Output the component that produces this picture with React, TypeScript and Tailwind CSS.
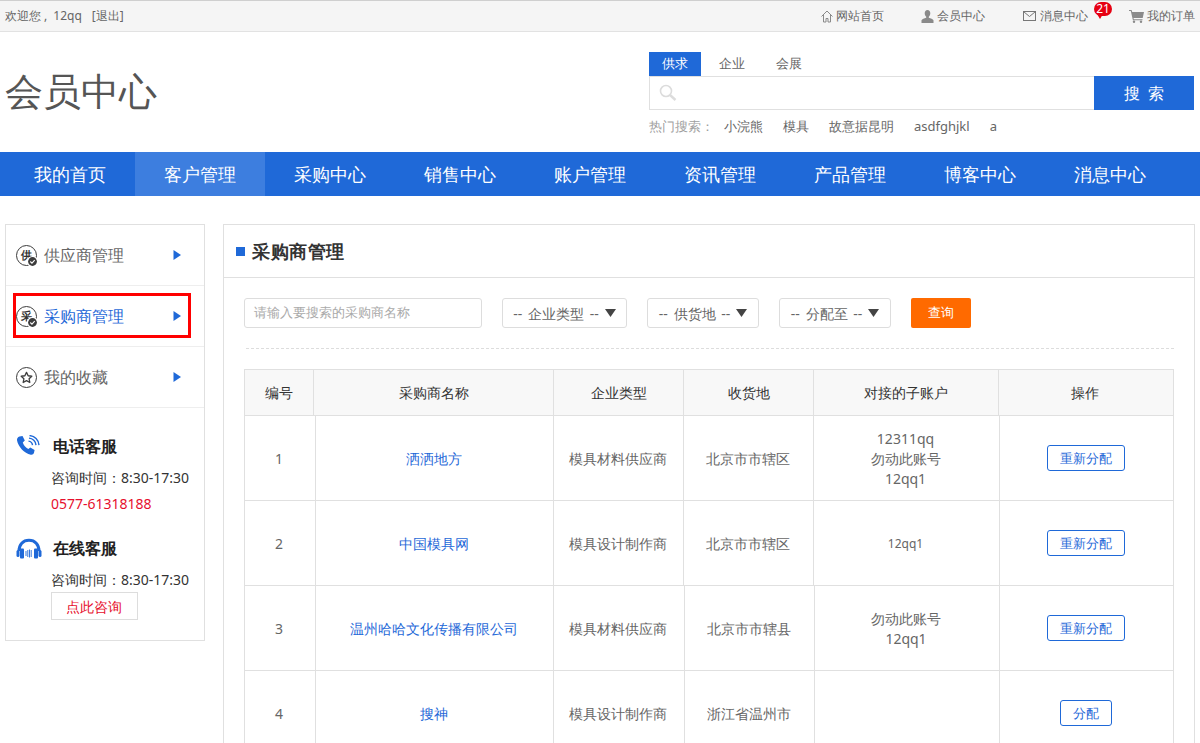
import React from 'react';

const FONT = "font-['Noto_Sans_CJK_SC','Microsoft_YaHei',sans-serif]";

const navItems = ['我的首页', '客户管理', '采购中心', '销售中心', '账户管理', '资讯管理', '产品管理', '博客中心', '消息中心'];
const hotWords = ['小浣熊', '模具', '故意据昆明', 'asdfghjkl', 'a'];

function HomeIcon() {
  return (
    <svg width="12" height="13" viewBox="0 0 12 13" fill="none" stroke="#8a8a8a" strokeWidth="1">
      <path d="M0.5 6.5 6 1l5.500 5.500M2.500 5v7h2.500V8.500h2V12h2.500V5" />
    </svg>
  );
}

function UserIcon() {
  return (
    <svg width="13" height="13" viewBox="0 0 13 13" fill="#8a8a8a">
      <path d="M6.500 0C8.300 0 9.300 1.300 9.300 3.200c0 1.500-.6 2.800-1.500 3.500v1.100c1.800.5 4.200 1.200 4.700 2.500V13H.5v-2.700c.5-1.300 2.900-2 4.700-2.500V6.700C4.300 6 3.700 4.700 3.700 3.200 3.700 1.300 4.700 0 6.500 0z" />
    </svg>
  );
}

function MailIcon() {
  return (
    <svg width="13" height="10" viewBox="0 0 13 10" fill="none" stroke="#777" strokeWidth="1">
      <rect x="0.500" y="0.500" width="12" height="9" />
      <path d="M0.800 0.800 6.500 5.500l5.700-4.700" />
    </svg>
  );
}

function CartIcon() {
  return (
    <svg width="15" height="13" viewBox="0 0 15 13" fill="#8a8a8a">
      <path d="M0 0h2.600l.6 2H15l-1.300 6H4.500l.3 1.200H13.500v1H3.900L1.800 1H0z" />
      <circle cx="5" cy="11.800" r="1.200" />
      <circle cx="12" cy="11.800" r="1.200" />
    </svg>
  );
}

function SearchIcon() {
  return (
    <svg width="18" height="18" viewBox="0 0 18 18" fill="none" stroke="#dcdcdc">
      <circle cx="7" cy="7" r="5.500" strokeWidth="1.600" />
      <path d="M11 11l5.500 5" strokeWidth="2.400" />
    </svg>
  );
}

function Arrow() {
  return (
    <svg width="8" height="10" viewBox="0 0 8 10" fill="#1f69d8">
      <path d="M0.500 0 8 5 0.500 10z" />
    </svg>
  );
}

function CheckBadge() {
  return (
    <svg className="absolute right-[-2px] bottom-[-2px]" width="11" height="11" viewBox="0 0 10 10">
      <circle cx="5" cy="5" r="5" fill="#fff" />
      <circle cx="5" cy="5" r="4" fill="#3c3c3c" />
      <path d="M3 5l1.500 1.500L7 3.800" fill="none" stroke="#fff" strokeWidth="1" />
    </svg>
  );
}

function CircleGlyph({ glyph }: { glyph: string }) {
  return (
    <div className="relative w-[21px] h-[21px] rounded-full border-[1.500px] border-[#3c3c3c] flex items-center justify-center pb-[2px] text-[11px] leading-none font-bold text-[#333]">
      {glyph}
      <CheckBadge />
    </div>
  );
}

function StarGlyph() {
  return (
    <div className="w-[21px] h-[21px] rounded-full border-[1.500px] border-[#3c3c3c] flex items-center justify-center">
      <svg width="13" height="13" viewBox="0 0 24 24" fill="none" stroke="#3c3c3c" strokeWidth="2.400" strokeLinejoin="round">
        <path d="M12 2.500l3 6.300 6.800.9-5 4.700 1.300 6.800-6.100-3.300-6.100 3.300 1.300-6.800-5-4.700 6.800-.9z" />
      </svg>
    </div>
  );
}

function PhoneIcon() {
  return (
    <svg width="24" height="22" viewBox="0 0 24 22" fill="#1f69d8">
      <path d="M3.500 1.500 6.500 1l2.300 4.600-2 2c.8 2.600 2.800 5 5.500 6.500l2-1.700 4.300 2.600-.6 2.800c-.3 1.400-1.800 2.200-3.200 1.900C8.200 18.200 2.200 11.800 1 5.200.8 3.500 1.800 2 3.500 1.500z" />
      <path d="M12.500 5.500a4.500 4.500 0 0 1 4 4M13 2.500a7.500 7.500 0 0 1 7 7M13.500 0a10 10 0 0 1 9.500 9.500" fill="none" stroke="#1f69d8" strokeWidth="1.400" transform="translate(0 0.600)" />
    </svg>
  );
}

function HeadsetIcon() {
  return (
    <svg width="26" height="21" viewBox="0 0 26 21" fill="#1f69d8">
      <path d="M3 13C3 6.500 7 2.200 13 2.200S23 6.500 23 13" fill="none" stroke="#1f69d8" strokeWidth="3" />
      <rect x="0.500" y="12" width="3" height="7" rx="1.500" />
      <rect x="4" y="10.500" width="4" height="10" rx="1" />
      <rect x="18" y="10.500" width="4" height="10" rx="1" />
      <rect x="22.500" y="12" width="3" height="7" rx="1.500" />
      <path d="M10 13v5M11.800 12v7M13.500 11.500v8M15.200 12v7" stroke="#1f69d8" strokeWidth="0.900" />
    </svg>
  );
}

function SelectBox({ label, w }: { label: string; w: string }) {
  return (
    <div className={`${w} h-[30px] border border-[#dddddd] rounded-[3px] flex items-center justify-center gap-[6px] text-[14px] text-[#666]`}>
      <span className="[word-spacing:2px]">-- {label} --</span>
      <svg width="11" height="8" viewBox="0 0 11 8" fill="#444">
        <path d="M0 0h11L5.500 8z" />
      </svg>
    </div>
  );
}

function SideItem({ icon, label, active }: { icon: React.ReactNode; label: string; active?: boolean }) {
  return (
    <div className="h-[61px] border-b border-[#eeeeee] flex items-center pl-[10px]">
      <div className="w-[21px] flex justify-center">{icon}</div>
      <span className={`ml-[7px] text-[16px] w-[129px] ${active ? 'text-[#1f69d8]' : 'text-[#666]'}`}>{label}</span>
      <Arrow />
    </div>
  );
}

interface RowData {
  no: number;
  name: string;
  type: string;
  place: string;
  account: React.ReactNode;
  action: string;
  edges: [string, string, string, string, string];
}

const rows: RowData[] = [
  {
    no: 1,
    name: '洒洒地方',
    type: '模具材料供应商',
    place: '北京市市辖区',
    account: (
      <>
        <div>12311qq</div>
        <div>勿动此账号</div>
        <div>12qq1</div>
      </>
    ),
    action: '重新分配',
    edges: ['w-[71px]', 'w-[238px]', 'w-[130px]', 'w-[130px]', 'w-[186px]'],
  },
  {
    no: 2,
    name: '中国模具网',
    type: '模具设计制作商',
    place: '北京市市辖区',
    account: <div className="text-[12px]">12qq1</div>,
    action: '重新分配',
    edges: ['w-[71px]', 'w-[238px]', 'w-[130px]', 'w-[130px]', 'w-[186px]'],
  },
  {
    no: 3,
    name: '温州哈哈文化传播有限公司',
    type: '模具材料供应商',
    place: '北京市市辖县',
    account: (
      <>
        <div>勿动此账号</div>
        <div>12qq1</div>
      </>
    ),
    action: '重新分配',
    edges: ['w-[71px]', 'w-[238px]', 'w-[131px]', 'w-[130px]', 'w-[185px]'],
  },
  {
    no: 4,
    name: '搜神',
    type: '模具设计制作商',
    place: '浙江省温州市',
    account: null,
    action: '分配',
    edges: ['w-[71px]', 'w-[238px]', 'w-[131px]', 'w-[130px]', 'w-[185px]'],
  },
];

const headers: [string, string][] = [
  ['编号', 'w-[69px]'],
  ['采购商名称', 'w-[240px]'],
  ['企业类型', 'w-[130px]'],
  ['收货地', 'w-[130px]'],
  ['对接的子账户', 'w-[185px]'],
];

function Cell({ className, children }: { className: string; children?: React.ReactNode }) {
  return <div className={`${className} shrink-0 border-r border-[#e0e0e0] flex flex-col items-center justify-center`}>{children}</div>;
}

export default function App() {
  return (
    <div className={`${FONT} h-screen overflow-hidden bg-white text-[#333]`}>
      {/* Top bar */}
      <div className="h-[32px] bg-[#f5f5f5] border-t border-t-[#cfcfcf] border-b border-b-[#e2e2e2] flex items-center justify-between pl-[5px] pr-[5px] text-[12px] text-[#666]">
        <div className="flex">
          <span>欢迎您 ,</span>
          <span className="ml-[6px]">12qq</span>
          <span className="ml-[10px]">[退出]</span>
        </div>
        <div className="flex items-center">
          <div className="flex items-center gap-[3px] mr-[37px]">
            <HomeIcon />
            <span>网站首页</span>
          </div>
          <div className="flex items-center gap-[3px] mr-[38px]">
            <UserIcon />
            <span>会员中心</span>
          </div>
          <div className="relative flex items-center gap-[4px] mr-[41px]">
            <MailIcon />
            <span>消息中心</span>
            <div className="absolute right-[-24px] top-[-5px] w-[18px] h-[14px] rounded-full bg-[#e60012] text-white text-[12px] leading-[14px] text-center">
              21
              <svg className="absolute left-[3px] top-[12px]" width="6" height="5" viewBox="0 0 6 5" fill="#e60012">
                <path d="M0 0h6L3 5z" />
              </svg>
            </div>
          </div>
          <div className="flex items-center gap-[3px]">
            <CartIcon />
            <span>我的订单</span>
          </div>
        </div>
      </div>

      {/* Header */}
      <div className="h-[120px] flex justify-between pl-[5px] pr-[6px]">
        <div className="text-[38px] leading-none text-[#555] mt-[39px]">会员中心</div>
        <div className="w-[545px] pt-[20px]">
          <div className="flex text-[13px] h-[24px] items-center">
            <div className="w-[52px] h-[24px] bg-[#1f69d8] text-white flex items-center justify-center">供求</div>
            <div className="w-[62px] text-center text-[#666]">企业</div>
            <div className="w-[52px] text-center text-[#666]">会展</div>
          </div>
          <div className="flex h-[34px]">
            <div className="flex-1 border border-r-0 border-[#e0e0e0] flex items-center pl-[9px]">
              <SearchIcon />
            </div>
            <div className="w-[100px] bg-[#1f69d8] text-white text-[16px] flex items-center justify-center gap-[8px]">
              <span>搜</span>
              <span>索</span>
            </div>
          </div>
          <div className="flex items-center mt-[7px] text-[13px] text-[#666]">
            <span className="text-[#a0a0a0] w-[75px]">热门搜索：</span>
            <div className="flex gap-[20px]">
              {hotWords.map((w) => (
                <span key={w}>{w}</span>
              ))}
            </div>
          </div>
        </div>
      </div>

      {/* Nav */}
      <div className="h-[44px] bg-[#1f69d8] pl-[5px] flex">
        {navItems.map((item, i) => (
          <div key={item} className={`w-[130px] flex items-center justify-center text-[18px] text-white ${i === 1 ? 'bg-[#3d7edf]' : ''}`}>
            {item}
          </div>
        ))}
      </div>

      {/* Body */}
      <div className="flex items-start gap-[18px] pl-[5px] pr-[5px] pt-[28px]">
        {/* Sidebar */}
        <div className="w-[200px] shrink-0 h-[417px] border border-[#e0e0e0]">
          <SideItem icon={<CircleGlyph glyph="供" />} label="供应商管理" />
          <div className="relative">
            <SideItem icon={<CircleGlyph glyph="采" />} label="采购商管理" active />
            <div className="absolute left-[7px] top-[7px] w-[178px] h-[45px] border-[3px] border-[#ff0000]" />
          </div>
          <SideItem icon={<StarGlyph />} label="我的收藏" />

          <div className="pl-[10px] pt-[24px]">
            <div className="flex items-center gap-[13px] h-[28px]">
              <PhoneIcon />
              <span className="text-[16px] font-bold text-[#222]">电话客服</span>
            </div>
            <div className="pl-[35px] mt-[5px] text-[14px] text-[#333] leading-[26px]">
              <div>咨询时间：8:30-17:30</div>
              <div className="text-[#e60f2d]">0577-61318188</div>
            </div>
            <div className="flex items-center gap-[11px] h-[28px] mt-[17px]">
              <HeadsetIcon />
              <span className="text-[16px] font-bold text-[#222]">在线客服</span>
            </div>
            <div className="pl-[35px] mt-[5px] text-[14px] text-[#333]">
              <div className="leading-[26px]">咨询时间：8:30-17:30</div>
              <div className="w-[87px] h-[28px] -mt-[1px] border border-[#dddddd] text-[#e60f2d] flex items-center justify-center pr-[2px]">点此咨询</div>
            </div>
          </div>
        </div>

        {/* Main */}
        <div className="w-[972px] shrink-0 border border-[#e0e0e0]">
          <div className="h-[53px] border-b border-[#e0e0e0] flex items-center pl-[12px]">
            <div className="w-[9px] h-[9px] bg-[#1f69d8]" />
            <span className="ml-[7px] text-[18px] tracking-[0.6px] font-bold text-[#333]">采购商管理</span>
          </div>

          <div className="px-[20px] pt-[20px]">
            {/* Filters */}
            <div className="flex items-center">
              <div className="w-[238px] h-[30px] border border-[#dddddd] rounded-[3px] flex items-center pl-[9px] text-[13px] text-[#aaaaaa]">请输入要搜索的采购商名称</div>
              <div className="ml-[20px]">
                <SelectBox label="企业类型" w="w-[125px]" />
              </div>
              <div className="ml-[20px]">
                <SelectBox label="供货地" w="w-[112px]" />
              </div>
              <div className="ml-[20px]">
                <SelectBox label="分配至" w="w-[112px]" />
              </div>
              <div className="ml-[20px] w-[60px] h-[30px] rounded-[2px] bg-[#ff6a00] text-white text-[13px] flex items-center justify-center">查询</div>
            </div>

            <div className="mt-[20px] ml-[2px] border-t border-dashed border-[#dddddd]" />

            {/* Table */}
            <div className="mt-[20px] w-[930px] border-l border-t border-[#e0e0e0] text-[14px]">
              <div className="flex h-[46px] bg-[#f8f8f8] border-b border-[#e0e0e0] text-[#333] border-r">
                {headers.map(([label, w]) => (
                  <Cell key={label} className={w}>
                    {label}
                  </Cell>
                ))}
                <div className="flex-1 flex items-center justify-center pr-[2px]">操作</div>
              </div>
              {rows.map((row) => (
                <div key={row.no} className="flex h-[85px] border-b border-r border-[#e0e0e0] text-[#666]">
                  <Cell className={`${row.edges[0]} pr-[2px]`}>{row.no}</Cell>
                  <Cell className={`${row.edges[1]} pr-[2px]`}>
                    <span className="text-[#1f69d8]">{row.name}</span>
                  </Cell>
                  <Cell className={`${row.edges[2]} pr-[2px]`}>{row.type}</Cell>
                  <Cell className={`${row.edges[3]} pr-[2px]`}>{row.place}</Cell>
                  <Cell className={`${row.edges[4]} leading-[20px] pr-[2px] pt-[1px]`}>{row.account}</Cell>
                  <div className="flex-1 flex items-center justify-center pr-[2px]">
                    <div className={`${row.action === '分配' ? 'w-[52px]' : 'w-[78px]'} h-[26px] pt-[1px] border border-[#1f69d8] rounded-[3px] text-[#1f69d8] text-[13px] flex items-center justify-center`}>{row.action}</div>
                  </div>
                </div>
              ))}
            </div>
          </div>
        </div>
      </div>
    </div>
  );
}
